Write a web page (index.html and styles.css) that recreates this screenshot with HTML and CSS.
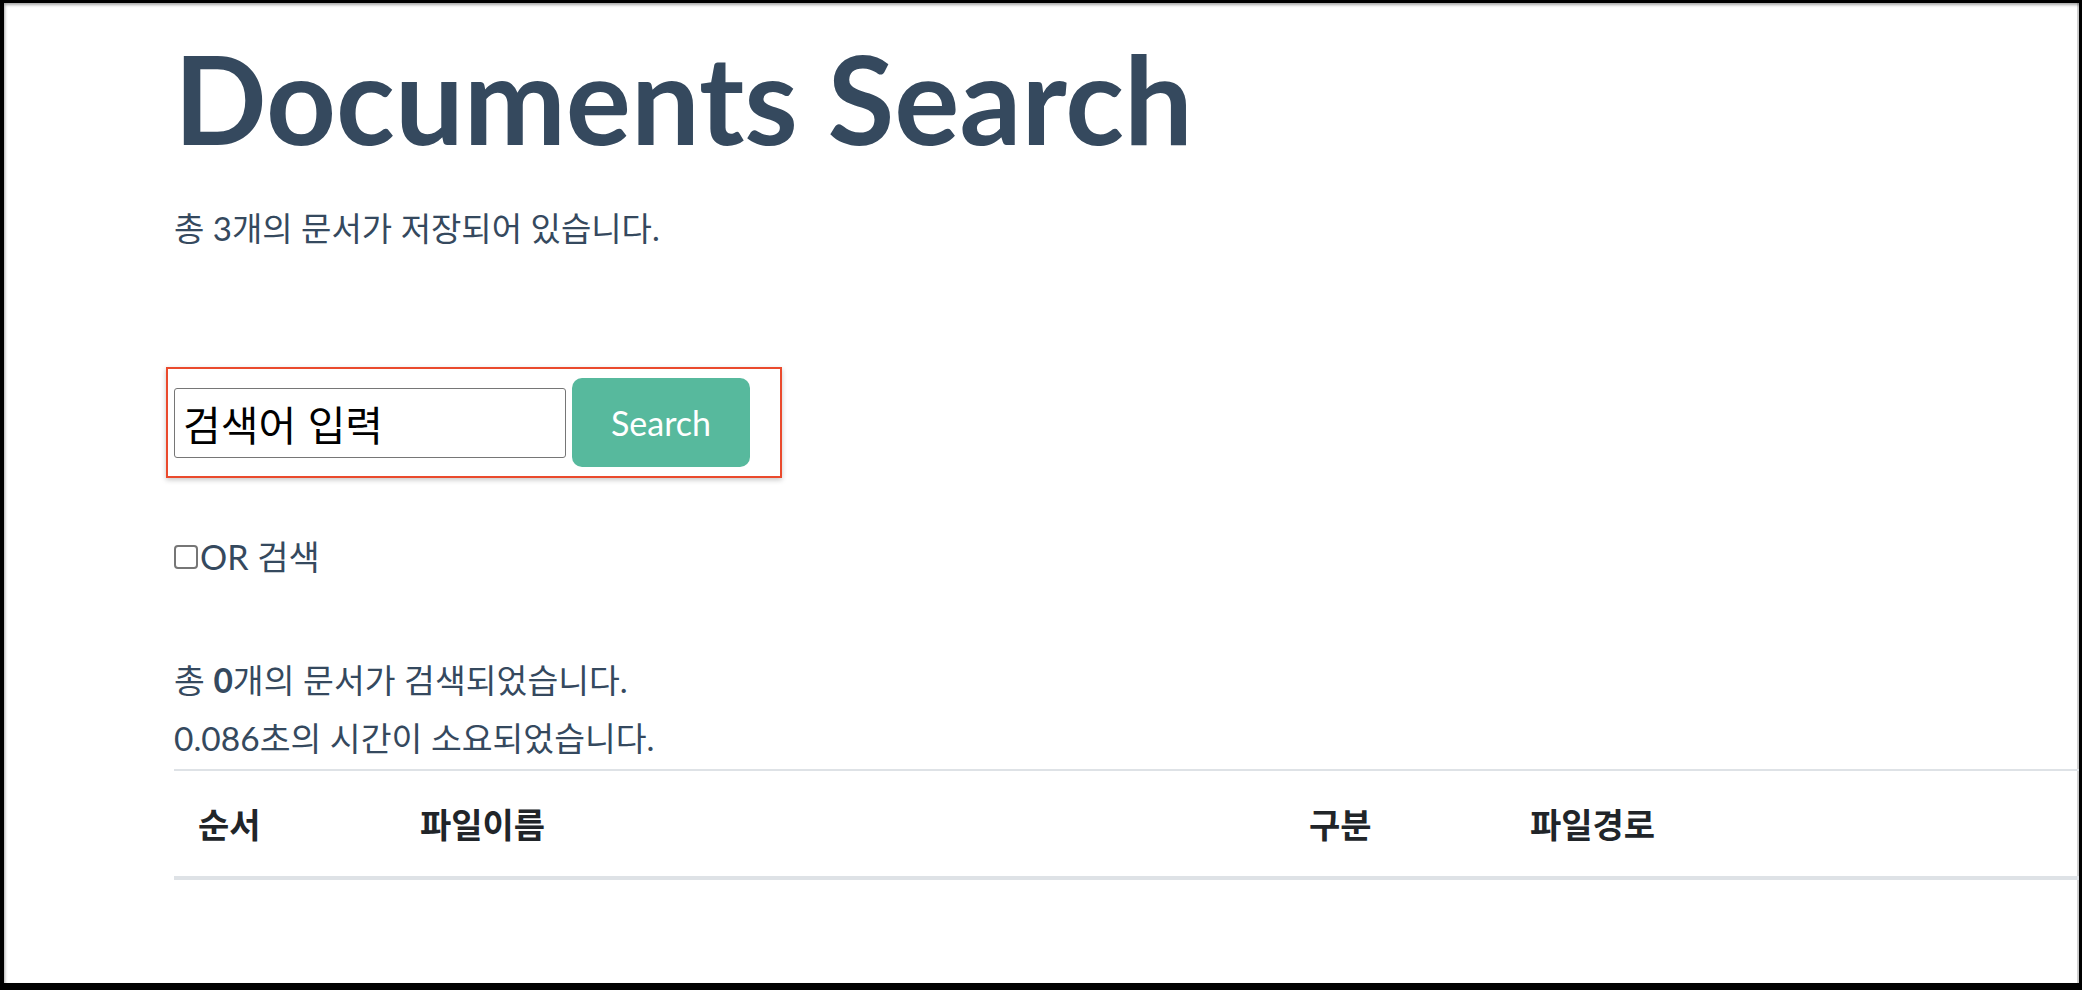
FILE: index.html
```html
<!DOCTYPE html>
<html lang="ko">
<head>
<meta charset="utf-8">
<title>Documents Search</title>
<link rel="stylesheet" href="styles.css">
</head>
<body>
<div class="frame">
  <main class="page">
    <h1 class="title">Documents Search</h1>
    <p class="stored">총 3개의 문서가 저장되어 있습니다.</p>

    <form class="search-box" onsubmit="return false">
      <input class="search-input" type="text" placeholder="검색어 입력">
      <button class="search-btn" type="submit">Search</button>
    </form>

    <label class="or-option"><input class="or-check" type="checkbox"><span>OR 검색</span></label>

    <p class="result">총 <b>0</b>개의 문서가 검색되었습니다.</p>
    <p class="elapsed">0.086초의 시간이 소요되었습니다.</p>

    <table class="doc-table">
      <colgroup>
        <col class="c-idx"><col class="c-name"><col class="c-type"><col class="c-path">
      </colgroup>
      <thead>
        <tr><th>순서</th><th>파일이름</th><th>구분</th><th>파일경로</th></tr>
      </thead>
      <tbody></tbody>
    </table>
  </main>
</div>
</body>
</html>
```

FILE: styles.css
```css
html, body {
  margin: 0;
  padding: 0;
  background: #ffffff;
}

.frame {
  height: 990px;
  box-sizing: border-box;
  border-style: solid;
  border-color: #000;
  border-width: 3px 3px 7px 4px;
  box-shadow: inset 1px 2px 3px rgba(0, 0, 0, 0.35), inset -2px 0 0 #d2d2d2;
  overflow: hidden;
}

.page {
  padding: 20px 0 0 170px;
  color: #35495e;
  font-family: Lato, "Noto Sans CJK KR", sans-serif;
}

.title {
  margin: 0;
  font-size: 122px;
  line-height: 150px;
  font-weight: 700;
  letter-spacing: 0;
}

.stored {
  margin: 35px 0 0;
  font-size: 33px;
  line-height: 40px;
}

.search-box {
  display: inline-flex;
  align-items: center;
  gap: 6px;
  margin: 119px 0 0 -8px;
  padding: 0 30px 0 6px;
  height: 107px;
  border: 2px solid #ea4a2d;
  box-shadow: 0 2px 5px rgba(0, 0, 0, 0.22);
}

.search-input {
  box-sizing: border-box;
  width: 392px;
  height: 70px;
  margin: 0;
  padding: 0 8px;
  border: 1px solid #767676;
  border-radius: 3px;
  font-family: "Noto Sans CJK KR", sans-serif;
  font-size: 41px;
  color: #000;
  outline: none;
}

.search-input::placeholder {
  color: #000;
  opacity: 1;
}

.search-btn {
  width: 178px;
  height: 89px;
  border: 0;
  border-radius: 10px;
  background: #57b99d;
  color: #fff;
  font-family: Lato, sans-serif;
  font-size: 34px;
  cursor: pointer;
}

.or-option {
  display: flex;
  align-items: center;
  margin-top: 57px;
  height: 40px;
  font-size: 34px;
}

.or-check {
  appearance: none;
  -webkit-appearance: none;
  box-sizing: border-box;
  width: 24px;
  height: 24px;
  margin: 3px 2px 0 0;
  border: 2px solid #767676;
  border-radius: 4px;
  background: #fff;
}

.result {
  margin: 81px 0 0;
  font-size: 33.5px;
  line-height: 48px;
}

.result b {
  font-weight: 700;
}

.elapsed {
  margin: 10px 0 0;
  font-size: 33.5px;
  line-height: 48px;
}

.doc-table {
  margin-top: 7px;
  width: 100%;
  border-collapse: collapse;
  table-layout: fixed;
  color: #212529;
  font-family: Lato, "Noto Sans CJK KR", sans-serif;
}

.c-idx { width: 222px; }
.c-name { width: 889px; }
.c-type { width: 221px; }

.doc-table thead th {
  height: 108px;
  box-sizing: border-box;
  padding: 0 24px;
  text-align: left;
  font-size: 34px;
  font-weight: 700;
  border-top: 2px solid #dee2e6;
  border-bottom: 4px solid #dee2e6;
  vertical-align: middle;
}
```
